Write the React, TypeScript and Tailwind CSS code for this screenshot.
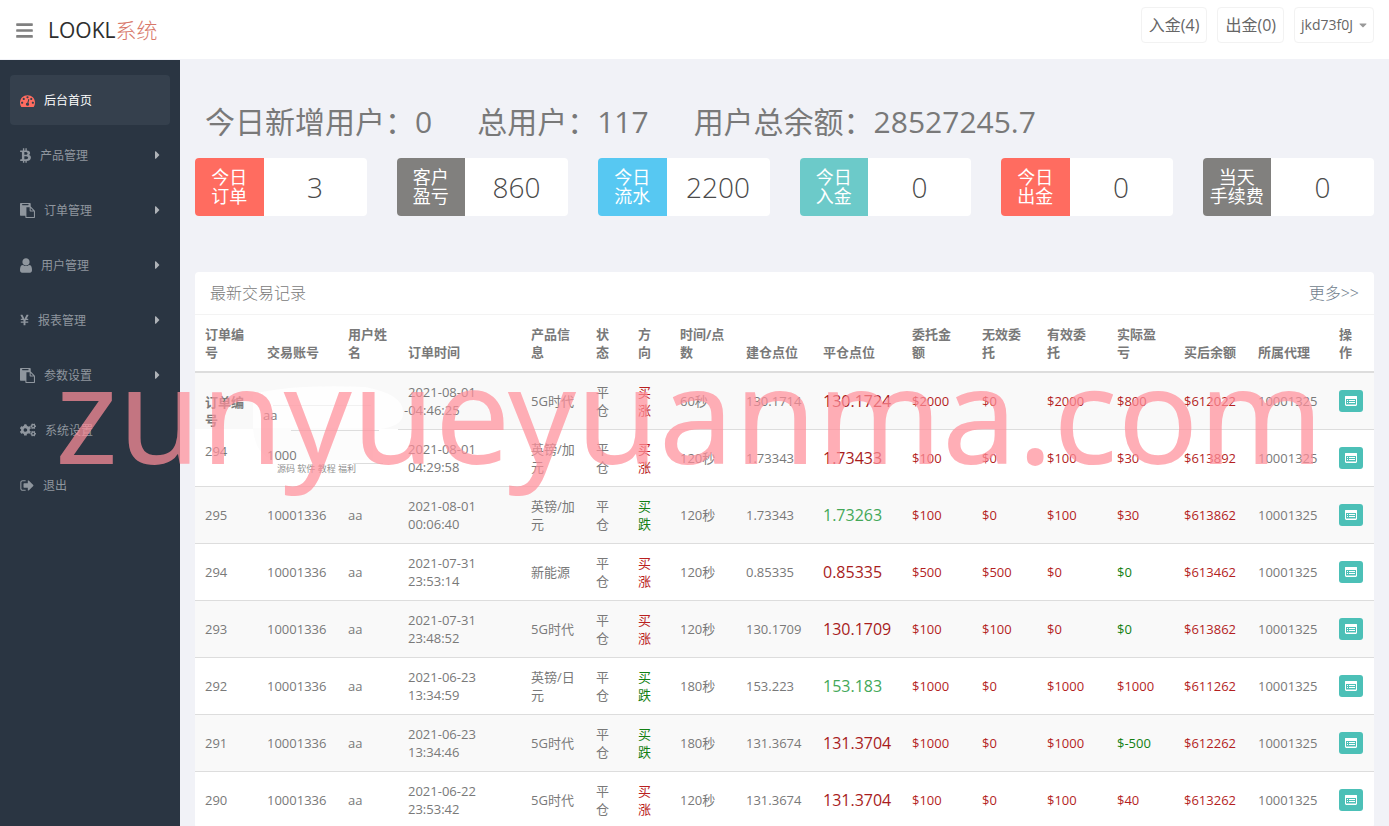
import { type ReactNode } from "react";
import { FaBars, FaBtc, FaCaretDown, FaCaretRight, FaCogs, FaYenSign } from "react-icons/fa";

function Glyph({ d, className, viewBox = "0 0 1792 1792" }: { d: string; className: string; viewBox?: string }) {
  return (
    <svg className={className} viewBox={viewBox} fill="currentColor" aria-hidden="true">
      <path d={d} />
    </svg>
  );
}

const dashboardPath =
  "M384 1152q0-53-37.5-90.5t-90.5-37.5-90.5 37.5-37.5 90.5 37.5 90.5 90.5 37.5 90.5-37.5 37.5-90.5zm192-448q0-53-37.5-90.5t-90.5-37.5-90.5 37.5-37.5 90.5 37.5 90.5 90.5 37.5 90.5-37.5 37.5-90.5zm428 481l101-382q6-26-7.5-48.5t-38.5-29.5-48 6.5-30 39.5l-101 382q-60 5-107 43.5t-63 98.5q-20 77 20 146t117 89 146-20 89-117q16-60-6-117t-72-91zm660-33q0-53-37.5-90.5t-90.5-37.5-90.5 37.5-37.5 90.5 37.5 90.5 90.5 37.5 90.5-37.5 37.5-90.5zm-640-640q0-53-37.5-90.5t-90.5-37.5-90.5 37.5-37.5 90.5 37.5 90.5 90.5 37.5 90.5-37.5 37.5-90.5zm448 192q0-53-37.5-90.5t-90.5-37.5-90.5 37.5-37.5 90.5 37.5 90.5 90.5 37.5 90.5-37.5 37.5-90.5zm320 448q0 261-141 483-19 29-54 29h-1402q-35 0-54-29-141-221-141-483 0-182 71-348t191-286 286-191 348-71 348 71 286 191 191 286 71 348z";
const pastePath =
  "M768 1664h896v-640h-416q-40 0-68-28t-28-68v-416h-384v1152zm256-1440v-64q0-13-9.5-22.5t-22.5-9.5h-704q-13 0-22.5 9.5t-9.5 22.5v64q0 13 9.5 22.5t22.5 9.5h704q13 0 22.5-9.5t9.5-22.5zm256 672h299l-299-299v299zm512 128v672q0 40-28 68t-68 28h-960q-40 0-68-28t-28-68v-160h-544q-40 0-68-28t-28-68v-1344q0-40 28-68t68-28h1088q40 0 68 28t28 68v328q21 13 36 28l408 408q28 28 48 76t20 88z";
const userPath =
  "M1536 1399q0 109-62.5 187t-150.5 78h-854q-88 0-150.5-78t-62.5-187q0-85 8.5-160.5t31.5-152 58.5-131 94-89 134.5-34.5q131 128 313 128t313-128q76 0 134.5 34.5t94 89 58.5 131 31.5 152 8.5 160.5zm-256-887q0 159-112.5 271.5t-271.5 112.5-271.5-112.5-112.5-271.5 112.5-271.5 271.5-112.5 271.5 112.5 112.5 271.5z";
const exitPath =
  "M704 1440q0 4 1 20t.5 26.5-3 23.5-10 19.5-20.5 6.5h-320q-119 0-203.5-84.5t-84.5-203.5v-704q0-119 84.5-203.5t203.5-84.5h320q13 0 22.5 9.5t9.5 22.5q0 4 1 20t.5 26.5-3 23.5-10 19.5-20.5 6.5h-320q-66 0-113 47t-47 113v704q0 66 47 113t113 47h312l11.5 1 11.5 3 8 5.5 7 9 2 13.5zm928-544q0 26-19 45l-544 544q-19 19-45 19t-45-19-19-45v-288h-448q-26 0-45-19t-19-45v-384q0-26 19-45t45-19h448v-288q0-26 19-45t45-19 45 19l544 544q19 19 19 45z";

type NavItem = { label: string; icon: ReactNode; sub: boolean; active?: boolean };

const nav: NavItem[] = [
  { label: "后台首页", icon: <Glyph className="size-[15px] text-[#ff6c60]" d={dashboardPath} />, sub: false, active: true },
  { label: "产品管理", icon: <FaBtc className="h-[15px] w-[11px]" />, sub: true },
  { label: "订单管理", icon: <Glyph className="size-[15px]" d={pastePath} />, sub: true },
  { label: "用户管理", icon: <Glyph className="h-[17px] w-3" viewBox="256 0 1280 1792" d={userPath} />, sub: true },
  { label: "报表管理", icon: <FaYenSign className="h-3 w-[9px]" />, sub: true },
  { label: "参数设置", icon: <Glyph className="size-[15px]" d={pastePath} />, sub: true },
  { label: "系统设置", icon: <FaCogs className="h-4 w-4" />, sub: false },
  { label: "退出", icon: <Glyph className="h-[15px] w-[14px]" viewBox="64 0 1600 1792" d={exitPath} />, sub: false },
];

const cards = [
  { lines: ["今日", "订单"], value: "3", tone: "bg-[#ff6c60]" },
  { lines: ["客户", "盈亏"], value: "860", tone: "bg-[#81807e]" },
  { lines: ["今日", "流水"], value: "2200", tone: "bg-[#57c8f2]" },
  { lines: ["今日", "入金"], value: "0", tone: "bg-[#6ccac9]" },
  { lines: ["今日", "出金"], value: "0", tone: "bg-[#ff6c60]" },
  { lines: ["当天", "手续费"], value: "0", tone: "bg-[#81807e]" },
];

const columns = [
  { title: "订单编号", width: "w-[62px]" },
  { title: "交易账号", width: "w-[81px]" },
  { title: "用户姓名", width: "w-[60px]" },
  { title: "订单时间", width: "w-[123px]" },
  { title: "产品信息", width: "w-[65px]" },
  { title: "状态", width: "w-[42px]" },
  { title: "方向", width: "w-[42px]" },
  { title: "时间/点数", width: "w-[66px]" },
  { title: "建仓点位", width: "w-[77px]" },
  { title: "平仓点位", width: "w-[89px]" },
  { title: "委托金额", width: "w-[70px]" },
  { title: "无效委托", width: "w-[65px]" },
  { title: "有效委托", width: "w-[70px]" },
  { title: "实际盈亏", width: "w-[67px]" },
  { title: "买后余额", width: "w-[74px]" },
  { title: "所属代理", width: "w-[81px]" },
  { title: "操作", width: "w-[45px]" },
];

type Row = {
  id: string;
  date: string;
  time: string;
  product: string;
  up: boolean;
  span: string;
  open: string;
  close: string;
  closeUp: boolean;
  stake: string;
  invalid: string;
  valid: string;
  profit: string;
  balance: string;
};

const rows: Row[] = [
  { id: "订单编号", date: "2021-08-01", time: "-04:46:25", product: "5G时代", up: true, span: "60秒", open: "130.1714", close: "130.1724", closeUp: true, stake: "$2000", invalid: "$0", valid: "$2000", profit: "$800", balance: "$612022" },
  { id: "294", date: "2021-08-01", time: "04:29:58", product: "英镑/加元", up: true, span: "120秒", open: "1.73343", close: "1.73433", closeUp: true, stake: "$100", invalid: "$0", valid: "$100", profit: "$30", balance: "$613892" },
  { id: "295", date: "2021-08-01", time: "00:06:40", product: "英镑/加元", up: false, span: "120秒", open: "1.73343", close: "1.73263", closeUp: false, stake: "$100", invalid: "$0", valid: "$100", profit: "$30", balance: "$613862" },
  { id: "294", date: "2021-07-31", time: "23:53:14", product: "新能源", up: true, span: "120秒", open: "0.85335", close: "0.85335", closeUp: true, stake: "$500", invalid: "$500", valid: "$0", profit: "$0", balance: "$613462" },
  { id: "293", date: "2021-07-31", time: "23:48:52", product: "5G时代", up: true, span: "120秒", open: "130.1709", close: "130.1709", closeUp: true, stake: "$100", invalid: "$100", valid: "$0", profit: "$0", balance: "$613862" },
  { id: "292", date: "2021-06-23", time: "13:34:59", product: "英镑/日元", up: false, span: "180秒", open: "153.223", close: "153.183", closeUp: false, stake: "$1000", invalid: "$0", valid: "$1000", profit: "$1000", balance: "$611262" },
  { id: "291", date: "2021-06-23", time: "13:34:46", product: "5G时代", up: false, span: "180秒", open: "131.3674", close: "131.3704", closeUp: true, stake: "$1000", invalid: "$0", valid: "$1000", profit: "$-500", balance: "$612262" },
  { id: "290", date: "2021-06-22", time: "23:53:42", product: "5G时代", up: true, span: "120秒", open: "131.3674", close: "131.3704", closeUp: true, stake: "$100", invalid: "$0", valid: "$100", profit: "$40", balance: "$613262" },
];

function LeadingCells({ row, index }: { row: Row; index: number }) {
  if (index === 0) {
    return (
      <>
        <td className="px-[10px] pb-0 align-bottom font-bold">{row.id}</td>
        <td colSpan={2} className="relative py-0 pr-[10px] pl-[6px] align-bottom">
          <svg className="absolute -top-px -left-1 h-[94px] w-[152px]" viewBox="0 0 152 94" aria-hidden="true">
            <path d="M0 22Q40 12 112 15Q150 22 150 40Q152 56 118 58L0 60Z" fill="#fefefe" />
            <path d="M0 56H120V88H20Q2 82 0 56Z" fill="#fcfcfc" />
            <path d="M20 33.500H118" stroke="#f1f1f1" />
            <path d="M38 58.500H126M100 91.500H130" stroke="#dddddd" />
          </svg>
          <span className="relative block pb-[5px]">aa</span>
        </td>
      </>
    );
  }
  if (index === 1) {
    return (
      <>
        <td className="px-[10px] pt-[13px] align-top">{row.id}</td>
        <td colSpan={2} className="relative px-[10px] pt-[17px] align-top">
          <span className="relative block leading-[18px]">1000</span>
          <span className="relative block pl-[10px] text-[9px] leading-[9px] whitespace-nowrap text-[#909090]">
            源码 软件 教程 福利
          </span>
        </td>
      </>
    );
  }
  return (
    <>
      <td className="px-[10px]">{row.id}</td>
      <td className="px-[10px]">10001336</td>
      <td className="px-[10px]">aa</td>
    </>
  );
}

function OrderRow({ row, index }: { row: Row; index: number }) {
  const lossOrZero = row.profit === "$0" || row.profit.startsWith("$-");
  const frame =
    index === 0 ? "h-[56px]" : index === 1 ? "h-[57px] [&>td:nth-child(n+3)]:border-t" : "h-[57px] [&>td]:border-t";
  return (
    <tr className={`odd:bg-[#f9f9f9] [&>td]:border-[#dddddd] ${frame}`}>
      <LeadingCells row={row} index={index} />
      <td className={index === 0 ? "pr-[10px] pl-[6px]" : "px-[10px]"}>
        <span className={index === 0 ? "block pl-1" : "block"}>{row.date}</span>
        <span className="block">{row.time}</span>
      </td>
      <td className="px-[10px]">{row.product}</td>
      <td className="px-[10px]">平仓</td>
      <td className={`px-[10px] ${row.up ? "text-[#b92020]" : "text-[#138013]"}`}>{row.up ? "买涨" : "买跌"}</td>
      <td className="px-[10px]">{row.span}</td>
      <td className="px-[10px]">{row.open}</td>
      <td className={`px-[10px] text-base ${row.closeUp ? "text-[#a81c1c]" : "text-[#44a858]"}`}>{row.close}</td>
      <td className="px-[10px] text-[#b41f1f]">{row.stake}</td>
      <td className="px-[10px] text-[#b41f1f]">{row.invalid}</td>
      <td className="px-[10px] text-[#b41f1f]">{row.valid}</td>
      <td className={`px-[10px] ${lossOrZero ? "text-[#138013]" : "text-[#b41f1f]"}`}>{row.profit}</td>
      <td className="px-[10px] text-[#b41f1f]">{row.balance}</td>
      <td className="px-[10px]">10001325</td>
      <td className="px-[10px]">
        <button
          type="button"
          aria-label="查看"
          className="flex h-[22px] w-6 items-center justify-center rounded-[3px] bg-[#4cc0b7] text-white"
        >
          <svg className="h-[10px] w-3" viewBox="0 0 12 10" aria-hidden="true">
            <rect x="0.500" y="0.500" width="11" height="9" rx="0.500" fill="none" stroke="currentColor" />
            <rect x="0" y="0" width="12" height="3" rx="0.500" fill="currentColor" />
            <path d="M2 4.500H3M4 4.500H10M2 6.500H3M4 6.500H10" stroke="currentColor" />
            <path d="M1 8.500H11" stroke="currentColor" opacity="0.5" />
          </svg>
        </button>
      </td>
    </tr>
  );
}

export default function App() {
  return (
    <div className="relative flex h-screen flex-col overflow-hidden bg-[#f1f2f7] font-['Open_Sans','Noto_Sans_CJK_SC',sans-serif] text-[13px] leading-[18px] text-[#797979]">
      <header className="flex h-[60px] shrink-0 items-start justify-between border-b border-[#f1f2f7] bg-white px-[15px]">
        <div className="flex h-[60px] items-center gap-[14px]">
          <button type="button" aria-label="菜单" className="text-[#808080]">
            <FaBars className="size-[19px]" />
          </button>
          <a href="#" className="text-[21px] leading-[30px] text-[#2e2e2e]">
            LOOKL<span className="font-light text-[#d8786a]">系统</span>
          </a>
        </div>
        <div className="flex gap-[10px] pt-[7px] text-[#666666]">
          <button type="button" className="h-9 rounded-[4px] border border-[#f2f2f2] px-[7px] text-base">
            入金(4)
          </button>
          <button type="button" className="h-9 rounded-[4px] border border-[#f2f2f2] px-[7px] text-base">
            出金(0)
          </button>
          <button type="button" className="flex h-9 items-center gap-[6px] rounded-[4px] border border-[#f2f2f2] px-[6px] text-sm">
            jkd73f0J
            <FaCaretDown className="h-3 w-2 text-[#999999]" />
          </button>
        </div>
      </header>

      <div className="flex min-h-0 flex-1">
        <aside className="w-[180px] shrink-0 bg-[#2a3542] px-[10px] pt-[15px]">
          <nav className="flex flex-col gap-[5px]">
            {nav.map((item) => (
              <a
                key={item.label}
                href="#"
                className={`flex h-[50px] items-center gap-[9px] rounded-[4px] px-[10px] text-xs ${item.active ? "bg-[#35404d] text-white" : "text-[#8f969e]"}`}
              >
                {item.icon}
                <span className="flex-1 pt-px">{item.label}</span>
                {item.sub && <FaCaretRight className="h-[14px] w-[5px] text-[#aeb2b7]" />}
              </a>
            ))}
          </nav>
        </aside>

        <main className="min-w-0 flex-1 overflow-hidden px-[15px] pt-[40px]">
          <h1 className="flex gap-[45px] px-[10px] text-[30px] leading-[44px] whitespace-nowrap">
            <span>今日新增用户：0</span>
            <span>总用户：117</span>
            <span>用户总余额：28527245.7</span>
          </h1>

          <section className="mt-[14px] grid grid-cols-6 gap-[30px]">
            {cards.map((card) => (
              <div key={card.lines.join("")} className="flex h-[58px] overflow-hidden rounded-[4px] bg-white">
                <div className={`flex w-2/5 flex-col items-center justify-center text-[18px] leading-[19px] whitespace-nowrap text-white ${card.tone}`}>
                  <span>{card.lines[0]}</span>
                  <span>{card.lines[1]}</span>
                </div>
                <div className="flex flex-1 items-center justify-center text-[28px] font-light text-[#4a4a4a]">{card.value}</div>
              </div>
            ))}
          </section>

          <section className="mt-14 rounded-[4px] bg-white">
            <div className="flex h-[43px] items-center justify-between border-b border-[#f3f3f3] px-[15px] text-base font-light">
              <h2>最新交易记录</h2>
              <a href="#" className="text-[#6f7d8c]">
                更多&gt;&gt;
              </a>
            </div>
            <table className="w-full table-fixed border-separate border-spacing-0">
              <thead>
                <tr>
                  {columns.map((c) => (
                    <th key={c.title} className={`${c.width} border-b-2 border-[#dddddd] p-[10px] text-left align-bottom font-bold`}>
                      {c.title}
                    </th>
                  ))}
                </tr>
              </thead>
              <tbody>
                {rows.map((row, i) => (
                  <OrderRow key={row.date + row.time} row={row} index={i} />
                ))}
              </tbody>
            </table>
          </section>
        </main>
      </div>

      <div className="pointer-events-none absolute top-[321px] left-[55px] font-['Noto_Sans',sans-serif] text-[134px] leading-[182px] whitespace-nowrap text-[#ff8f9a]/72">
        zunyueyuanma.com
      </div>
    </div>
  );
}
